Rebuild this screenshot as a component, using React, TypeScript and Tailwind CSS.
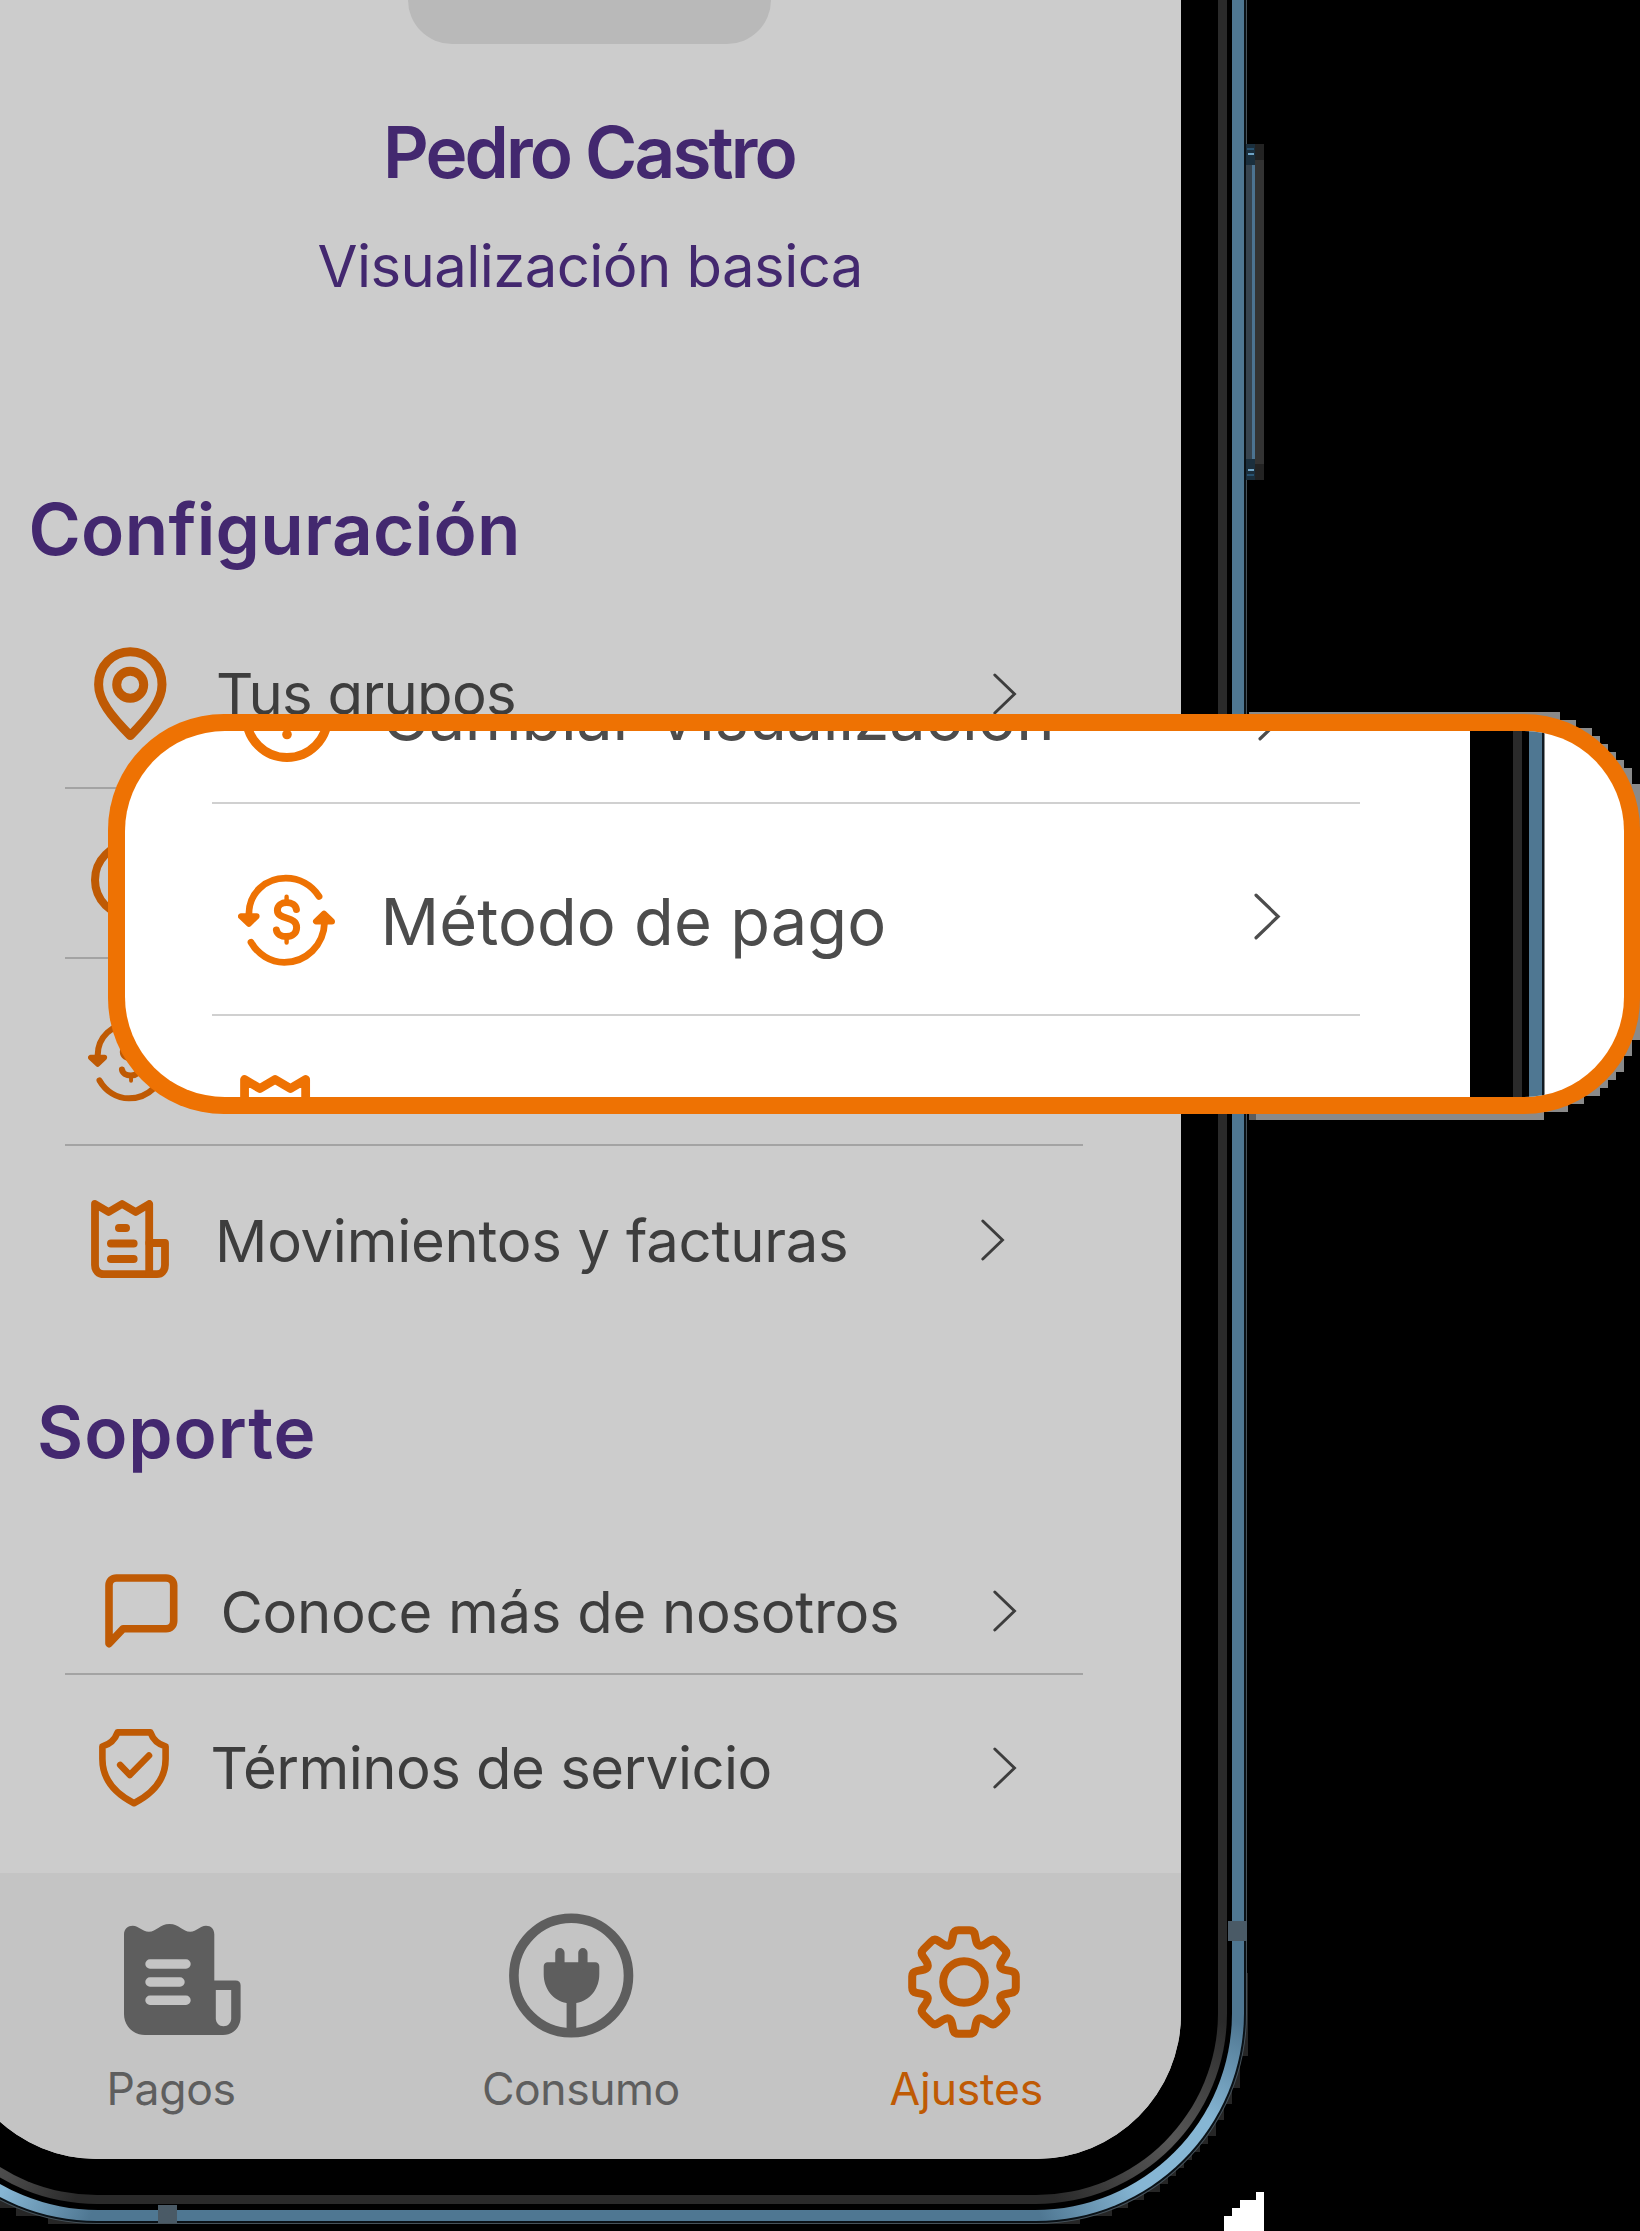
import type { ReactNode } from "react";

function PinIcon() {
  return (
    <svg width="73" height="94" viewBox="0 0 73 94" fill="none" stroke="#bf5a04" strokeWidth="9" strokeLinejoin="round">
      <path d="M36.3 4.7C18.5 4.7 4.6 19 4.6 37.5C4.6 53.5 16.5 68.5 36.3 88.6C56 68.5 68 53.5 68 37.5C68 19 54 4.7 36.3 4.7Z" />
      <circle cx="36.2" cy="37.7" r="13.5" />
    </svg>
  );
}

function HelpIcon({ className }: { className: string }) {
  return (
    <svg className={className} viewBox="0 0 90 90" fill="none" stroke="currentColor" strokeWidth="9" strokeLinecap="round">
      <circle cx="45" cy="45" r="40.5" />
      <path d="M45 24V42" />
      <circle cx="45" cy="62.5" r="4.8" fill="currentColor" stroke="none" />
    </svg>
  );
}

function PaymentIcon({ className }: { className: string }) {
  return (
    <svg className={className} viewBox="0 0 97.5 92.5" fill="none" stroke="currentColor" strokeWidth="6.8" strokeLinecap="round" strokeLinejoin="round">
      <path d="M10.9 40C10.9 19 27.5 4.2 47.8 4.2C61.5 4.2 73.5 11 81 22.4" />
      <path d="M13 68.2C20 80.5 32.5 88.4 46.2 88.4C68 88.4 85.8 71.5 86.6 48" />
      <path d="M3 42.3H18.6L10.9 49.8Z" fill="currentColor" strokeWidth="6" />
      <path d="M78 47.5H94L86 39.6Z" fill="currentColor" strokeWidth="6" />
      <path strokeWidth="7" d="M58.4 35.5C57.8 31.3 53.6 28.6 48.8 28.6C43.4 28.6 39.4 31.5 39.4 36.2C39.4 46.5 58.6 41.5 58.6 53.4C58.6 59.2 54 62.6 48.5 62.6C43 62.6 39 60 38.4 56" />
      <path strokeWidth="4.4" d="M48.6 22.8V28M48.6 63V68.6" />
    </svg>
  );
}

function BillIcon({ className }: { className: string }) {
  return (
    <svg className={className} viewBox="0 0 78 78.5" fill="none" stroke="currentColor" strokeWidth="8" strokeLinecap="round" strokeLinejoin="round">
      <path d="M4 4L17.6 12L31.1 4L44.7 12L58.2 4V74.2H13C7.5 74.2 4 70.5 4 65Z" strokeWidth="7.8" />
      <path d="M58.3 43H74V65C74 70.5 70.5 74.2 66 74.2H58" strokeWidth="7.8" />
      <path d="M28 28H35M20 43.4H42.6M20 59H42.6" strokeWidth="8" />
    </svg>
  );
}

function ChatIcon() {
  return (
    <svg width="73" height="74" viewBox="0 0 73 74" fill="none" stroke="#bf5a04" strokeWidth="7.6" strokeLinecap="round" strokeLinejoin="round">
      <path d="M4 69.6V11.5C4 7 7.2 4 11.5 4H61C65.500 4 68.700 7 68.700 11.500V47C68.700 51.500 65.500 54.700 61 54.700H18.200Z" />
    </svg>
  );
}

function ShieldIcon() {
  return (
    <svg width="70" height="78" viewBox="0 0 70 78" fill="none" stroke="#bf5a04" strokeWidth="6.6" strokeLinejoin="round">
      <path d="M18.600 3.400H51.400C53.800 10 59.500 15.500 66.600 17.400V30C66.600 50 54 64.500 35 74.200C16 64.500 3.400 50 3.400 30V17.400C10.500 15.500 16.200 10 18.600 3.400Z" />
      <path d="M21.200 36L30.800 46L50 26.500" strokeLinecap="round" />
    </svg>
  );
}

function PagosIcon() {
  return (
    <svg width="117" height="111" viewBox="0 0 117 111">
      <path
        fill="#5e5e5e"
        d="M0 10.500C0 5 4 1.800 8.700 1.800C15 1.800 18 7.800 24.900 7.800C32.500 7.800 35.500 0 45.500 0C55.500 0 58.500 7.800 66.200 7.800C73 7.800 75.500 1.800 82 1.800C87 1.800 90.300 5 90.300 10.500V56.500H111.500C114.800 56.500 116.600 58.300 116.600 61.300V93C116.600 103.500 109 111 99 111H21C9 111 0 102 0 90Z"
      />
      <path fill="#c4c4c4" d="M91.800 66H107.200V94.300C107.200 99 104 102.300 99.500 102.300C95 102.300 91.800 99 91.800 94.300Z" />
      <path d="M26 40H62M26 58H56M26 76.200H62" stroke="#c4c4c4" strokeWidth="9.400" strokeLinecap="round" />
    </svg>
  );
}

function ConsumoIcon() {
  return (
    <svg width="125" height="125" viewBox="0 0 125 125">
      <circle cx="62.200" cy="62.500" r="57.300" fill="none" stroke="#5e5e5e" strokeWidth="9.600" />
      <path fill="#5e5e5e" d="M34.700 53.500C34.700 50.800 36.200 49.200 38.800 49.200H86.200C88.800 49.200 90.300 50.800 90.300 53.500V61C90.300 76 81 87.500 67.300 90V120H57.600V90C44 87.500 34.700 76 34.700 61Z" />
      <path d="M50.900 39.700V52M73.900 39.700V52" stroke="#5e5e5e" strokeWidth="9.300" strokeLinecap="round" />
    </svg>
  );
}

// Outline of the eight-toothed gear, with every corner rounded.
function gearPath() {
  const tooth = [
    [-10, -51.800, 4.500],
    [10, -51.800, 4.500],
    [13.700, -33, 9],
  ];
  const pts: number[][] = [];
  for (let k = 0; k < 8; k++) {
    const a = (k * Math.PI) / 4;
    for (const [x, y, r] of tooth) {
      pts.push([x * Math.cos(a) - y * Math.sin(a), x * Math.sin(a) + y * Math.cos(a), r]);
    }
  }
  const n = pts.length;
  const towards = (p: number[], q: number[], d: number) => {
    const l = Math.hypot(q[0] - p[0], q[1] - p[1]);
    const t = Math.min(d / l, 0.5);
    return `${(p[0] + (q[0] - p[0]) * t).toFixed(2)} ${(p[1] + (q[1] - p[1]) * t).toFixed(2)}`;
  };
  return (
    pts
      .map((p, i) => {
        const prev = pts[(i + n - 1) % n];
        const next = pts[(i + 1) % n];
        return `${i ? "L" : "M"}${towards(p, prev, p[2])}Q${p[0].toFixed(2)} ${p[1].toFixed(2)} ${towards(p, next, p[2])}`;
      })
      .join("") + "Z"
  );
}

function AjustesIcon() {
  return (
    <svg width="112" height="112" viewBox="-56 -56 112 112" fill="none" stroke="#bf5a04" strokeWidth="8" strokeLinejoin="round">
      <path d={gearPath()} />
      <circle r="20.800" />
    </svg>
  );
}

function Chevron({ className }: { className: string }) {
  return (
    <svg className={className} viewBox="0 0 24 42" fill="none" stroke="currentColor" strokeWidth="2.900" strokeLinecap="round">
      <path d="M1.800 2L21.500 21L1.800 40" />
    </svg>
  );
}

function Divider({ className = "" }: { className?: string }) {
  return <div className={`ml-[65px] h-[2px] w-[1018px] shrink-0 bg-[#a3a3a3] ${className}`} />;
}

function Row({ icon, iconBox, className, chevron, children }: { icon: ReactNode; iconBox: string; className: string; chevron: string; children: ReactNode }) {
  return (
    <div className={`flex shrink-0 items-center text-[58px] leading-[72px] text-[#3d3d3d] ${className}`}>
      <div className={`shrink-0 ${iconBox}`}>{icon}</div>
      {children}
      <Chevron className={`ml-auto h-[42px] w-[24px] ${chevron}`} />
    </div>
  );
}

function Screen() {
  return (
    <div className="ml-[48px] flex h-full w-[1181px] flex-col whitespace-nowrap">
      <div className="ml-[408px] h-[44px] w-[363px] shrink-0 rounded-b-[44px] bg-[#b9b9b9]" />
      <h1 className="mt-[72px] ml-[383px] h-[72px] text-[71px] leading-[72px] font-semibold tracking-[-2.870px] text-[#43286f]">Pedro Castro</h1>
      <p className="mt-[42px] ml-[317.500px] h-[72px] text-[58px] leading-[72px] tracking-[-0.550px] text-[#43286f]">Visualización basica</p>
      <h2 className="mt-[191px] ml-[28.500px] h-[72px] text-[71px] leading-[72px] font-semibold tracking-[0.300px] text-[#43286f]">Configuración</h2>
      <Row className="mt-[35px] h-[187px]" iconBox="w-[216px] pl-[94px]" icon={<PinIcon />} chevron="mr-[164.500px]">
        <span className="tracking-[-0.710px]">Tus grupos</span>
      </Row>
      <Divider />
      <Row className="h-[168px] pt-[14px]" iconBox="w-[216px] pl-[91px]" icon={<HelpIcon className="h-[80px] w-[80px] text-[#bf5a04]" />} chevron="mr-[164.500px]">
        <span className="tracking-[-0.560px]">Cambiar Visualización</span>
      </Row>
      <Divider />
      <Row className="h-[185px] pt-[19px]" iconBox="w-[214px] pl-[88px]" icon={<PaymentIcon className="h-[82px] w-[86.400px] text-[#bf5a04]" />} chevron="mr-[164.500px]">
        <span>Método de pago</span>
      </Row>
      <Divider />
      <Row className="h-[187px]" iconBox="w-[215px] pl-[91px]" icon={<BillIcon className="h-[78.500px] w-[78px] text-[#bf5a04]" />} chevron="mr-[176px]">
        <span className="pt-[2px] tracking-[-0.260px]">Movimientos y facturas</span>
      </Row>
      <h2 className="mt-[63px] ml-[37px] h-[72px] text-[71px] leading-[72px] font-semibold tracking-[0.950px] text-[#43286f]">Soporte</h2>
      <Row className="mt-[81px] h-[124px]" iconBox="w-[220.500px] pl-[105px]" icon={<ChatIcon />} chevron="mr-[164.500px]">
        <span className="pt-[2px] tracking-[-0.280px]">Conoce más de nosotros</span>
      </Row>
      <Divider />
      <Row className="h-[185px]" iconBox="w-[210.500px] pl-[99.300px]" icon={<ShieldIcon />} chevron="mr-[164.500px]">
        <span className="tracking-[-0.520px]">Términos de servicio</span>
      </Row>
      <nav className="mt-[13px] -ml-[48px] flex h-[286px] w-[1229px] shrink-0 bg-[#c4c4c4] pl-[48px] text-[44.500px] leading-[54px] text-[#5e5e5e]">
        <div className="ml-[72px] flex w-[200px] flex-col">
          <div className="ml-[52.400px] h-[189px] pt-[50.500px]">
            <PagosIcon />
          </div>
          <span className="ml-[34.500px] tracking-[-0.350px]">Pagos</span>
        </div>
        <div className="ml-[209px] flex w-[200px] flex-col">
          <div className="ml-[27.800px] h-[189px] pt-[40.300px]">
            <ConsumoIcon />
          </div>
          <span className="ml-px tracking-[-0.440px]">Consumo</span>
        </div>
        <div className="ml-[185px] flex w-[200px] flex-col text-[#bf5a04]">
          <div className="ml-[42px] h-[189px] pt-[52.500px]">
            <AjustesIcon />
          </div>
          <span className="ml-[23.600px] tracking-[-0.190px]">Ajustes</span>
        </div>
      </nav>
    </div>
  );
}

function PhoneFrame() {
  return (
    <div className="-ml-[114px] h-[2224px] w-[1361px] shrink-0 rounded-b-[211px] bg-[#46525a] px-px pb-px">
      <div className="h-full rounded-b-[210px] bg-[#0a1116] px-[2px] pb-[2px]">
        <div className="h-full rounded-b-[208px] bg-[#4f7792] bg-[radial-gradient(circle_at_1290px_2160px,#86b6d4_0px,#86b6d4_50px,transparent_150px),radial-gradient(circle_at_80px_2170px,#86b6d4_0px,#86b6d4_40px,transparent_130px)] px-[12px] pb-[11px]">
          <div className="h-full rounded-b-[197px] bg-black px-[5px] pb-[6px]">
            <div className="h-full rounded-b-[191px] bg-[#2a2a2a] bg-[radial-gradient(circle_at_1265px_2140px,#575757_0px,#4a4a4a_40px,transparent_130px),radial-gradient(circle_at_60px_2150px,#575757_0px,#4a4a4a_50px,transparent_120px)] px-[9px] pb-[9px]">
              <div className="h-full rounded-b-[182px] bg-black px-[37px] pb-[36px]">
                <div className="h-full overflow-hidden rounded-b-[145px] bg-[#cccccc]">
                  <Screen />
                </div>
              </div>
            </div>
          </div>
        </div>
      </div>
    </div>
  );
}

// Stepped edges around the phone outline and the callout.
function EdgeSteps() {
  return (
    <svg className="absolute top-0 left-0" width="1640" height="2231" viewBox="0 0 1640 2231" shapeRendering="crispEdges">
      <path fill="#262626" d="M1180 1973H1248V2056H1240V2088H1232V2104H1224V2120H1216V2136H1208V2144H1200V2152H1192V2160H1184V2168H1176V2176H1168V2184H1160V2192H1144V2200H1128V2208H1112V2216H1080V2224H1035V2100Z" />
      <path fill="#262626" d="M0 2190V2208H16V2216H48V2224H100V2190Z" />
      <path fill="#ffffff" d="M1264 2192H1256V2200H1240V2208H1232V2216H1224V2231H1264Z" />
      <path fill="#8a8a8a" d="M1249 712H1560V720H1576V728H1592V736H1600V744H1608V752H1616V760H1624V768H1632V784H1640V1040H1632V1056H1624V1072H1616V1080H1608V1088H1600V1096H1584V1104H1568V1112H1544V1120H1249Z" />
      <path fill="#5c5c5c" d="M1249 1112H1256V1120H1249Z" />
    </svg>
  );
}

function PowerButton() {
  return (
    <div className="absolute top-[144px] left-[1246px] flex h-[336px] w-[18px]">
      <div className="flex w-[9px] flex-col items-center bg-[#1b2f3d] py-[4px]">
        <div className="h-[2px] w-[7px] bg-[#27516f]" />
        <div className="mt-[3px] h-[2px] w-[6px] bg-[#6fa3c4]" />
        <div className="mt-[10px] flex w-full flex-1">
          <div className="w-[6px] bg-[#37444f]" />
          <div className="w-[3px] bg-[#4c7391]" />
        </div>
        <div className="mt-[10px] h-[2px] w-[6px] bg-[#6fa3c4]" />
        <div className="mt-[3px] h-[2px] w-[7px] bg-[#27516f]" />
      </div>
      <div className="flex-1 border-y-[16px] border-[#232323] bg-[#333333]" />
    </div>
  );
}

function Callout() {
  return (
    <div className="absolute top-[714px] left-[108px] h-[399.500px] w-[1532px] rounded-[116px] bg-[#ee7203] p-[16.500px]">
      <div className="flex h-full overflow-hidden rounded-[100px] bg-white text-[65px] leading-[80px] whitespace-nowrap text-[#4c4c4c]">
        <div className="flex w-[1345.500px] shrink-0 flex-col">
          <div className="-mt-[98.500px] flex h-[170px] shrink-0 items-center">
            <div className="w-[257px] shrink-0 pl-[117px]">
              <HelpIcon className="h-[90px] w-[90px] text-[#ee7203]" />
            </div>
            <span className="tracking-[-0.330px]">Cambiar Visualización</span>
            <Chevron className="mr-[185px] ml-auto h-[47px] w-[27px]" />
          </div>
          <div className="ml-[87.500px] h-[2px] w-[1148px] shrink-0 bg-[#d0d0d0]" />
          <div className="flex h-[209.500px] shrink-0 items-center pt-[22px]">
            <div className="w-[256px] shrink-0 pl-[113px]">
              <PaymentIcon className="h-[92.500px] w-[97.500px] text-[#ee7203]" />
            </div>
            <span className="pt-[4px] tracking-[0.050px]">Método de pago</span>
            <Chevron className="mr-[189px] mb-[7px] ml-auto h-[47px] w-[27px]" />
          </div>
          <div className="ml-[87.500px] h-[2px] w-[1148px] shrink-0 bg-[#d0d0d0]" />
          <div className="flex h-[207px] shrink-0 items-center">
            <div className="w-[255.500px] shrink-0 pl-[115.500px]">
              <BillIcon className="h-[88.500px] w-[88px] text-[#ee7203]" />
            </div>
            <span className="pt-[10px] tracking-[-0.250px]">Movimientos y facturas</span>
          </div>
        </div>
        <div className="w-[43px] bg-black" />
        <div className="w-[9px] bg-[#2a2a2a]" />
        <div className="w-[7px] bg-black" />
        <div className="w-[12.500px] bg-[#4f7792]" />
        <div className="w-[2.500px] bg-[#0f1a22]" />
        <div className="w-px bg-[#8a8a8a]" />
      </div>
    </div>
  );
}

export default function App() {
  return (
    <main className="relative flex h-[2231px] w-[1640px] overflow-hidden bg-black font-['Inter',sans-serif]">
      <EdgeSteps />
      <div className="relative">
        <PhoneFrame />
        <div className="absolute top-[1921px] left-[1228px] h-[20px] w-[19px] bg-[#4a5a66]" />
        <div className="absolute top-[2205px] left-[158px] h-[18px] w-[19px] bg-[#4a5a66]" />
      </div>
      <PowerButton />
      <Callout />
    </main>
  );
}
